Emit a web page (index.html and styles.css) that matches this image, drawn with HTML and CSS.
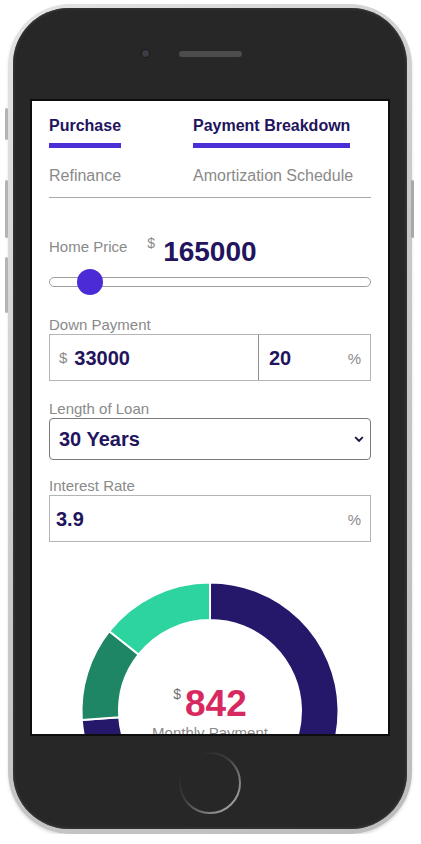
FILE: index.html
```html
<!DOCTYPE html>
<html>
<head>
<meta charset="utf-8">
<title>Mortgage Calculator</title>
<link rel="stylesheet" href="styles.css">
</head>
<body>
<div class="phone">
  <span class="side-btn btn-l1"></span>
  <span class="side-btn btn-l2"></span>
  <span class="side-btn btn-l3"></span>
  <span class="side-btn btn-r1"></span>
  <div class="phone-body">
    <div class="bezel-top">
      <span class="camera"></span>
      <span class="speaker"></span>
      <span></span>
    </div>
    <div class="screen">
      <div class="tabs">
        <div class="tab-row">
          <div class="tab active">Purchase<span class="tab-bar"></span></div>
          <div class="tab active">Payment Breakdown<span class="tab-bar"></span></div>
        </div>
        <div class="tab-row second">
          <div class="tab">Refinance</div>
          <div class="tab">Amortization Schedule</div>
        </div>
      </div>

      <div class="price-row">
        <span class="label">Home Price</span>
        <span class="cur">$</span>
        <span class="price">165000</span>
      </div>
      <div class="slider">
        <div class="track"></div>
        <div class="thumb"></div>
      </div>

      <div class="field-label first">Down Payment</div>
      <div class="split-box">
        <div class="box-left"><span class="unit">$</span><span class="val">33000</span></div>
        <div class="box-right"><span class="val">20</span><span class="unit">%</span></div>
      </div>

      <div class="field-label">Length of Loan</div>
      <div class="select">
        <span class="val">30 Years</span>
        <svg class="chev" width="10" height="7" viewBox="0 0 10 7"><path d="M1.2 1.2 L5 5 L8.8 1.2" fill="none" stroke="#1b1340" stroke-width="1.9"/></svg>
      </div>

      <div class="field-label rate">Interest Rate</div>
      <div class="rate-box">
        <span class="val">3.9</span><span class="unit">%</span>
      </div>

      <div class="chart">
        <svg class="donut" width="258" height="258" viewBox="0 0 258 258">
          <path d="M129 0.5 A128.5 128.5 0 1 1 0.81 137.96 L38.22 135.35 A91 91 0 1 0 129 38 Z" fill="#25176a" stroke="#fff" stroke-width="2"/>
          <path d="M0.81 137.96 A128.5 128.5 0 0 1 28.3 49.19 L57.68 72.48 A91 91 0 0 0 38.22 135.35 Z" fill="#1e8565" stroke="#fff" stroke-width="2"/>
          <path d="M28.3 49.19 A128.5 128.5 0 0 1 129 0.5 L129 38 A91 91 0 0 0 57.68 72.48 Z" fill="#2dd4a0" stroke="#fff" stroke-width="2"/>
        </svg>
        <div class="chart-center">
          <div class="pay-row"><span class="pay-cur">$</span><span class="pay">842</span></div>
          <div class="pay-label">Monthly Payment</div>
        </div>
      </div>
    </div>
    <div class="bezel-bottom">
      <svg width="64" height="64" viewBox="0 0 64 64">
        <defs>
          <linearGradient id="hb" x1="0.15" y1="0.15" x2="0.85" y2="0.85">
            <stop offset="0" stop-color="#262626"/>
            <stop offset="0.4" stop-color="#3c3c3c"/>
            <stop offset="1" stop-color="#9a9a9a"/>
          </linearGradient>
        </defs>
        <circle cx="32" cy="32" r="30" fill="none" stroke="url(#hb)" stroke-width="2"/>
      </svg>
    </div>
  </div>
</div>
</body>
</html>
```
FILE: styles.css
```css
* { box-sizing: border-box; }
html, body { margin: 0; padding: 0; background: #fff; }
body { font-family: "Liberation Sans", Arial, sans-serif; }

.phone {
  position: relative;
  width: 404px;
  height: 830px;
  margin: 4px 0 0 8px;
  padding: 4px 5px 5px 5px;
  border-radius: 62px;
  background: linear-gradient(135deg, #e4e4e4 0%, #c9c9c9 50%, #bdbdbd 100%);
  box-shadow: 0 2px 3px rgba(0,0,0,0.12);
}
.side-btn {
  position: absolute;
  width: 3px;
  background: #b4b4b4;
  border-radius: 2px;
}
.btn-l1 { left: -3px; top: 104px; height: 32px; }
.btn-l2 { left: -3px; top: 176px; height: 58px; }
.btn-l3 { left: -3px; top: 253px; height: 56px; }
.btn-r1 { right: -2px; top: 176px; height: 58px; background: #a9a9a9; }

.phone-body {
  width: 394px;
  height: 821px;
  border-radius: 56px;
  background: #272727;
  box-shadow: inset 0 0 3px 1px #3a3a3a;
  display: flex;
  flex-direction: column;
  align-items: center;
}
.bezel-top {
  width: 100%;
  height: 91px;
  padding-top: 43px;
  display: grid;
  grid-template-columns: 1fr auto 1fr;
  align-items: start;
}
.camera {
  justify-self: end;
  width: 7px;
  height: 7px;
  margin-right: 30px;
  margin-top: -1px;
  border-radius: 50%;
  background: #3b3b46;
  box-shadow: 0 0 0 1px #1c1c1c;
}
.speaker {
  width: 63px;
  height: 6px;
  border-radius: 3px;
  background: #4c4c4c;
}

.screen {
  width: 360px;
  height: 637px;
  border: 2px solid #0e0e0e;
  background: #fff;
  overflow: hidden;
  padding: 16px 17px 0 17px;
}

.tabs {
  border-bottom: 1px solid #a9a9a9;
  padding-bottom: 12px;
}
.tab-row {
  display: grid;
  grid-template-columns: 144px auto;
}
.tab-row.second { margin-top: 19px; }
.tab {
  font-size: 16px;
  line-height: 18px;
  color: #8a8a8a;
  justify-self: start;
}
.tab.active {
  color: #22145d;
  font-weight: bold;
}
.tab-bar {
  display: block;
  height: 5px;
  margin-top: 8px;
  background: #4b2ed6;
}

.price-row {
  display: flex;
  align-items: flex-start;
  height: 32px;
  margin-top: 38px;
}
.label {
  font-size: 15px;
  line-height: 18px;
  margin-top: 2px;
  color: #8a8a8a;
}
.cur {
  font-size: 14px;
  line-height: 16px;
  margin-top: -1px;
  margin-left: 20px;
  color: #8a8a8a;
}
.price {
  font-size: 28px;
  line-height: 32px;
  font-weight: bold;
  color: #22145d;
  margin-left: 8px;
}

.slider {
  position: relative;
  height: 26px;
  margin-top: 1px;
}
.track {
  position: absolute;
  left: 0;
  right: 0;
  top: 8px;
  height: 10px;
  border: 1px solid #9e9e9e;
  border-radius: 5px;
  background: #fff;
}
.thumb {
  position: absolute;
  left: 28px;
  top: 0;
  width: 26px;
  height: 26px;
  border-radius: 50%;
  background: #4a2bd6;
}

.field-label {
  font-size: 15px;
  line-height: 18px;
  color: #8a8a8a;
  margin-top: 19px;
}
.field-label.first { margin-top: 21px; }
.field-label.rate { margin-top: 17px; }

.val {
  font-size: 20px;
  line-height: 22px;
  font-weight: bold;
  color: #22145d;
}
.unit {
  font-size: 15px;
  line-height: 18px;
  color: #8a8a8a;
}

.split-box {
  display: flex;
  height: 47px;
  border: 1px solid #b4b4b4;
}
.box-left {
  width: 209px;
  display: flex;
  align-items: center;
  padding-left: 9px;
  border-right: 1px solid #8f8f8f;
}
.box-left .val { margin-left: 7px; }
.box-right {
  flex: 1;
  display: flex;
  align-items: center;
  justify-content: space-between;
  padding: 0 9px 0 10px;
}
.box-right .unit { margin-top: 3px; }

.select {
  height: 42px;
  border: 1px solid #7a7a7a;
  border-radius: 4px;
  display: flex;
  align-items: center;
  justify-content: space-between;
  padding: 0 6px 0 9px;
}
.select .val { margin-top: -1px; }
.chev { margin-top: 0; }

.rate-box {
  height: 47px;
  border: 1px solid #b4b4b4;
  display: flex;
  align-items: center;
  justify-content: space-between;
  padding: 0 9px 0 6px;
}
.rate-box .unit { margin-top: 3px; }

.chart {
  position: relative;
  width: 258px;
  height: 258px;
  margin: 40px auto 0 auto;
}
.donut {
  display: block;
  overflow: visible;
}
.chart-center {
  position: absolute;
  left: 0;
  right: 0;
  top: 102px;
  display: flex;
  flex-direction: column;
  align-items: center;
}
.pay-row {
  display: flex;
  align-items: flex-start;
}
.pay-cur {
  font-size: 14px;
  line-height: 16px;
  color: #6f6f6f;
  margin-top: 2px;
  margin-right: 4px;
}
.pay {
  font-size: 37px;
  line-height: 40px;
  font-weight: bold;
  color: #d7285f;
}
.pay-label {
  font-size: 15px;
  line-height: 18px;
  color: #8a8a8a;
}

.bezel-bottom {
  flex: 1;
  width: 100%;
  display: flex;
  align-items: center;
  justify-content: center;
}
.bezel-bottom svg { display: block; }
```
